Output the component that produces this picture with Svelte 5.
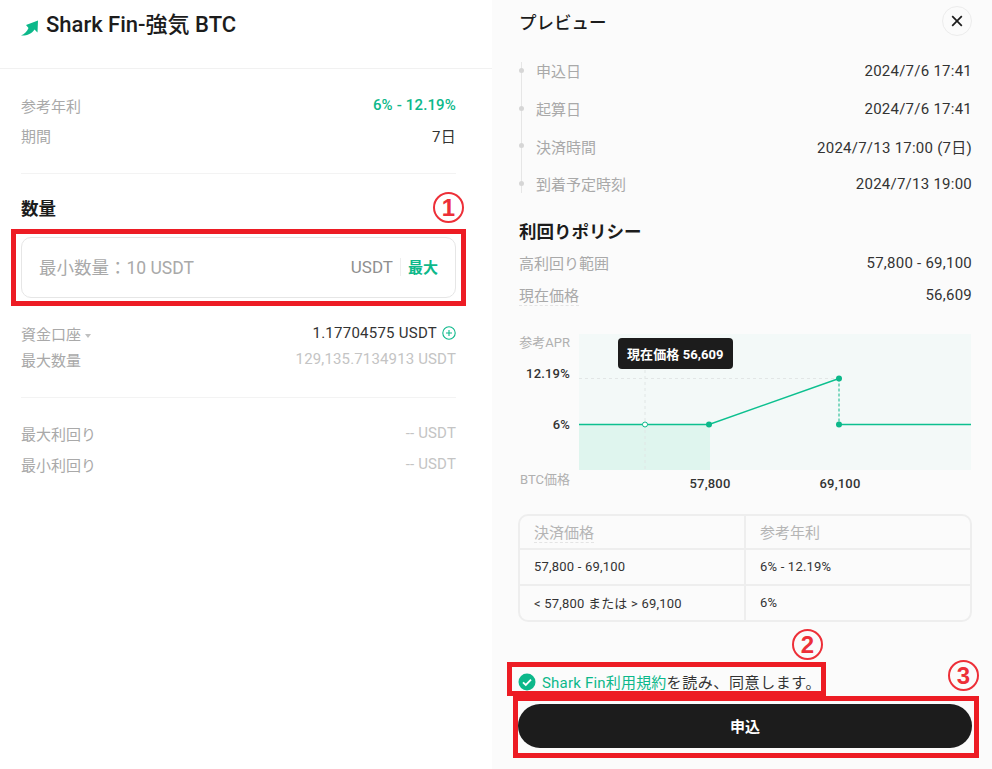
<script>
  const timeline = [
    ['申込日', '2024/7/6 17:41'],
    ['起算日', '2024/7/6 17:41'],
    ['決済時間', '2024/7/13 17:00 (7日)'],
    ['到着予定時刻', '2024/7/13 19:00']
  ];
</script>

<div class="page">
  <section class="left">
    <header class="head">
      <svg class="arrow" viewBox="0 0 18 16" width="18" height="16" aria-hidden="true">
        <path d="M0 15.500 C3.500 14 6 11.500 7.500 8 L5 5 L17 0.500 L16.500 12.500 L13.500 9.500 C10.500 14 6 15.800 0 15.500 Z" fill="#0cb88a" />
      </svg>
      <h1>Shark Fin-強気 BTC</h1>
    </header>

    <div class="block info">
      <div class="row"><span class="mute">参考年利</span><span class="green med">6% - 12.19%</span></div>
      <div class="row"><span class="mute">期間</span><span class="dark">7日</span></div>
    </div>

    <div class="block amount">
      <h2>数量</h2>
      <div class="input">
        <span class="ph">最小数量：10 USDT</span>
        <span class="unit">USDT</span>
        <span class="sep"></span>
        <span class="max">最大</span>
      </div>
      <div class="account">
        <div class="row r1">
          <span class="mute">資金口座<i class="caret"></i></span>
          <span class="dark bal">1.17704575 USDT
            <svg viewBox="0 0 14 14" width="14" height="14" aria-hidden="true">
              <circle cx="7" cy="7" r="6.200" fill="none" stroke="#0cb88a" stroke-width="1.100" />
              <path d="M7 4v6M4 7h6" stroke="#0cb88a" stroke-width="1.100" />
            </svg>
          </span>
        </div>
        <div class="row r2"><span class="mute">最大数量</span><span class="light">129,135.7134913 USDT</span></div>
      </div>
    </div>

    <div class="block yield">
      <div class="row"><span class="mute">最大利回り</span><span class="light">-- USDT</span></div>
      <div class="row"><span class="mute">最小利回り</span><span class="light">-- USDT</span></div>
    </div>
  </section>

  <section class="right">
    <header class="rhead">
      <h3>プレビュー</h3>
      <button class="close" aria-label="閉じる">
        <svg viewBox="0 0 12 12" width="12" height="12" aria-hidden="true">
          <path d="M1.200 1.200l9.600 9.600M10.800 1.200l-9.600 9.600" stroke="#1c1c1c" stroke-width="1.700" />
        </svg>
      </button>
    </header>

    <ul class="timeline">
      {#each timeline as [label, value]}
        <li><span class="mute">{label}</span><span class="dark">{value}</span></li>
      {/each}
    </ul>

    <h2 class="policy">利回りポリシー</h2>
    <div class="row pr"><span class="mute">高利回り範囲</span><span class="dark">57,800 - 69,100</span></div>
    <div class="row pr"><span class="mute dotted">現在価格</span><span class="dark">56,609</span></div>

    <div class="chart">
      <svg viewBox="0 0 453 170" width="453" height="170" aria-hidden="true">
        <rect x="60" y="0" width="392" height="136" fill="#f3f9f8" />
        <rect x="60" y="91" width="131" height="45" fill="#dff5ee" />
        <path d="M60 44.500H320" stroke="#e2e6e6" stroke-dasharray="3 3" fill="none" />
        <path d="M126 30V136" stroke="#e0e6e5" stroke-dasharray="3 3" fill="none" />
        <path d="M60 90.500H190L320 44.500" stroke="#0cc08f" stroke-width="1.400" fill="none" />
        <path d="M320 90.500H452" stroke="#0cc08f" stroke-width="1.400" fill="none" />
        <path d="M320 44.500V90.500" stroke="#0cb88a" stroke-dasharray="3 2" fill="none" />
        <circle cx="126" cy="90.500" r="2.500" fill="#fff" stroke="#0cb88a" />
        <circle cx="190" cy="90.500" r="3" fill="#0cb88a" />
        <circle cx="320" cy="44.500" r="3" fill="#0cb88a" />
        <circle cx="320" cy="90.500" r="3" fill="#0cb88a" />
        <text x="51" y="13" class="t-m" text-anchor="end">参考APR</text>
        <text x="51" y="44" class="t-d" text-anchor="end">12.19%</text>
        <text x="51" y="95" class="t-d" text-anchor="end">6%</text>
        <text x="51" y="150" class="t-m" text-anchor="end">BTC価格</text>
        <text x="191" y="154" class="t-d" text-anchor="middle">57,800</text>
        <text x="321" y="154" class="t-d" text-anchor="middle">69,100</text>
      </svg>
      <div class="tip">現在価格 56,609</div>
    </div>

    <div class="table">
      <div class="c th"><span class="dotted">決済価格</span></div>
      <div class="c th">参考年利</div>
      <div class="c">57,800 - 69,100</div>
      <div class="c">6% - 12.19%</div>
      <div class="c">&lt; 57,800 または &gt; 69,100</div>
      <div class="c">6%</div>
    </div>

    <div class="agree">
      <svg viewBox="0 0 18 18" width="18" height="18" aria-hidden="true">
        <circle cx="9" cy="9" r="8.500" fill="#0cb88a" />
        <path d="M5 9.300l2.800 2.700L13 6.700" stroke="#fff" stroke-width="1.800" fill="none" />
      </svg>
      <span><span class="green terms">Shark Fin利用規約</span><span class="rest">を読み、同意します。</span></span>
    </div>
    <button class="submit">申込</button>
  </section>

  <div class="mark box1"></div>
  <div class="mark box2"></div>
  <div class="mark box3"></div>
  <div class="num n1">1</div>
  <div class="num n2">2</div>
  <div class="num n3">3</div>
</div>

<style>
  :global(body) { margin: 0; background: #fff; }
  .page {
    position: relative;
    width: 992px;
    height: 769px;
    overflow: hidden;
    display: flex;
    font-family: Roboto, "Noto Sans CJK JP", sans-serif;
    font-size: 15px;
    color: #1c1c1c;
  }
  .left { width: 492px; flex: none; background: #fff; }
  .right {
    width: 500px;
    flex: none;
    box-sizing: border-box;
    padding: 0 20px 0 27px;
    background: #fbfbfb;
  }
  .head {
    height: 69px;
    box-sizing: border-box;
    border-bottom: 1px solid #f1f1f1;
    padding: 13px 0 0 21px;
    display: flex;
    align-items: flex-start;
    gap: 7px;
  }
  .arrow { margin-top: 7px; }
  h1 { margin: 0; font-size: 22px; line-height: 24px; font-weight: 500; }
  h2 { margin: 0; font-size: 17.500px; line-height: 24px; font-weight: 700; }
  h3 { margin: 1px 0 0; font-size: 17.500px; line-height: 24px; font-weight: 500; }
  .row { display: flex; justify-content: space-between; align-items: center; }
  .mute { color: #a9a9a9; }
  .dark { color: #333; letter-spacing: .25px; }
  .light { color: #c4c4c4; letter-spacing: .15px; }
  .green { color: #0cb88a; letter-spacing: .1px; }
  .med { font-weight: 500; letter-spacing: .15px; }
  .block { margin: 0 36px 0 21px; }
  .info {
    padding-top: 26px;
    height: 105px;
    box-sizing: border-box;
    border-bottom: 1px solid #f3f3f3;
    display: flex;
    flex-direction: column;
    gap: 10px;
  }
  .info .row { height: 20px; }
  .amount { padding-top: 23px; border-bottom: 1px solid #f3f3f3; height: 224px; box-sizing: border-box; }
  .input {
    margin-top: 16px;
    height: 61px;
    box-sizing: border-box;
    border: 1px solid #e6e6e6;
    border-radius: 10px;
    padding: 0 17px 2px;
    display: flex;
    align-items: center;
  }
  .ph { flex: 1; font-size: 17.500px; color: #a9a9a9; }
  .unit { font-size: 17px; color: #8f8f8f; }
  .sep { width: 1px; height: 18px; background: #eee; margin: 0 7px; }
  .max { font-weight: 700; color: #0cb88a; }
  .account { margin-top: 25px; }
  .r1 { height: 20px; }
  .r2 { height: 20px; margin-top: 6px; }
  .caret {
    display: inline-block;
    margin-left: 4px;
    border: 3.500px solid transparent;
    border-top: 4px solid #c0c0c0;
    border-bottom: 0;
    vertical-align: 2px;
  }
  .bal { display: flex; align-items: center; gap: 5px; }
  .yield { padding-top: 25px; display: flex; flex-direction: column; gap: 11px; }
  .yield .row { height: 20px; }

  .rhead { height: 44px; display: flex; justify-content: space-between; align-items: center; }
  .close {
    width: 30px;
    height: 30px;
    margin-top: -2px;
    padding: 0;
    border: 1.500px solid #ececec;
    border-radius: 50%;
    background: transparent;
    display: flex;
    align-items: center;
    justify-content: center;
  }
  .timeline { list-style: none; margin: 8px 0 0; padding: 0; position: relative; }
  .timeline::before {
    content: "";
    position: absolute;
    left: 2px;
    top: 10px;
    bottom: 10px;
    width: 1px;
    background: #e6e6e6;
  }
  .timeline li {
    position: relative;
    height: 37.700px;
    padding-left: 17px;
    display: flex;
    justify-content: space-between;
    align-items: center;
  }
  .timeline li::before {
    content: "";
    position: absolute;
    left: 0;
    top: 16px;
    width: 5px;
    height: 5px;
    border-radius: 50%;
    background: #d6d6d6;
  }
  .policy { margin-top: 17px; }
  .pr { height: 20px; margin-top: 12px; }
  .pr:first-of-type { margin-top: 9px; }
  .dotted { border-bottom: 1px dashed #e4e4e4; }
  .chart { position: relative; margin-top: 29px; height: 170px; }
  .chart svg { display: block; }
  .t-m { font-size: 13px; fill: #b0b0b0; }
  .t-d { font-size: 13px; font-weight: 500; fill: #333; letter-spacing: .2px; }
  .tip {
    position: absolute;
    left: 99px;
    top: 4px;
    height: 31px;
    padding: 0 9px;
    display: flex;
    align-items: center;
    border-radius: 4px;
    background: #1c1c1c;
    color: #fff;
    font-size: 13px;
    font-weight: 700;
    letter-spacing: .08px;
    white-space: nowrap;
  }
  .table {
    margin: 10px 0 0 -1px;
    width: 454px;
    box-sizing: border-box;
    border: 2px solid #eee;
    border-radius: 10px;
    display: grid;
    grid-template-columns: 226px 1fr;
    grid-template-rows: 34px 36px 34px;
    overflow: hidden;
    font-size: 13px;
    letter-spacing: .2px;
    color: #333;
  }
  .c {
    display: flex;
    align-items: center;
    padding-left: 14px;
    border-bottom: 2px solid #eee;
  }
  .c:nth-child(odd) { border-right: 2px solid #eee; }
  .c:nth-last-child(-n + 2) { border-bottom: 0; }
  .th { font-size: 15px; color: #b5b5b5; letter-spacing: 0; }
  .agree {
    margin: 50px 0 0 -1px;
    height: 20px;
    display: flex;
    align-items: center;
    gap: 6px;
    color: #333;
  }
  .terms { letter-spacing: .2px; }
  .rest { letter-spacing: .6px; }
  .submit {
    margin: 12px 0 0 -1px;
    display: block;
    width: 454px;
    height: 44px;
    border: 0;
    border-radius: 22px;
    background: #1c1c1c;
    color: #fff;
    font: 700 15px Roboto, "Noto Sans CJK JP", sans-serif;
  }

  .mark { position: absolute; box-sizing: border-box; border: 5px solid #ed1c24; }
  .box1 { left: 11px; top: 229px; width: 455px; height: 77px; }
  .box2 { left: 507px; top: 662px; width: 319px; height: 34px; }
  .box3 { left: 513px; top: 696px; width: 466px; height: 62px; }
  .num {
    position: absolute;
    width: 31px;
    height: 31px;
    box-sizing: border-box;
    border: 2px solid #ed2f38;
    border-radius: 50%;
    color: #ed2f38;
    font: 700 24px/27px "Liberation Sans", sans-serif;
    text-align: center;
  }
  .n1 { left: 433px; top: 192px; }
  .n2 { left: 792px; top: 629px; }
  .n3 { left: 948px; top: 660px; }
</style>
